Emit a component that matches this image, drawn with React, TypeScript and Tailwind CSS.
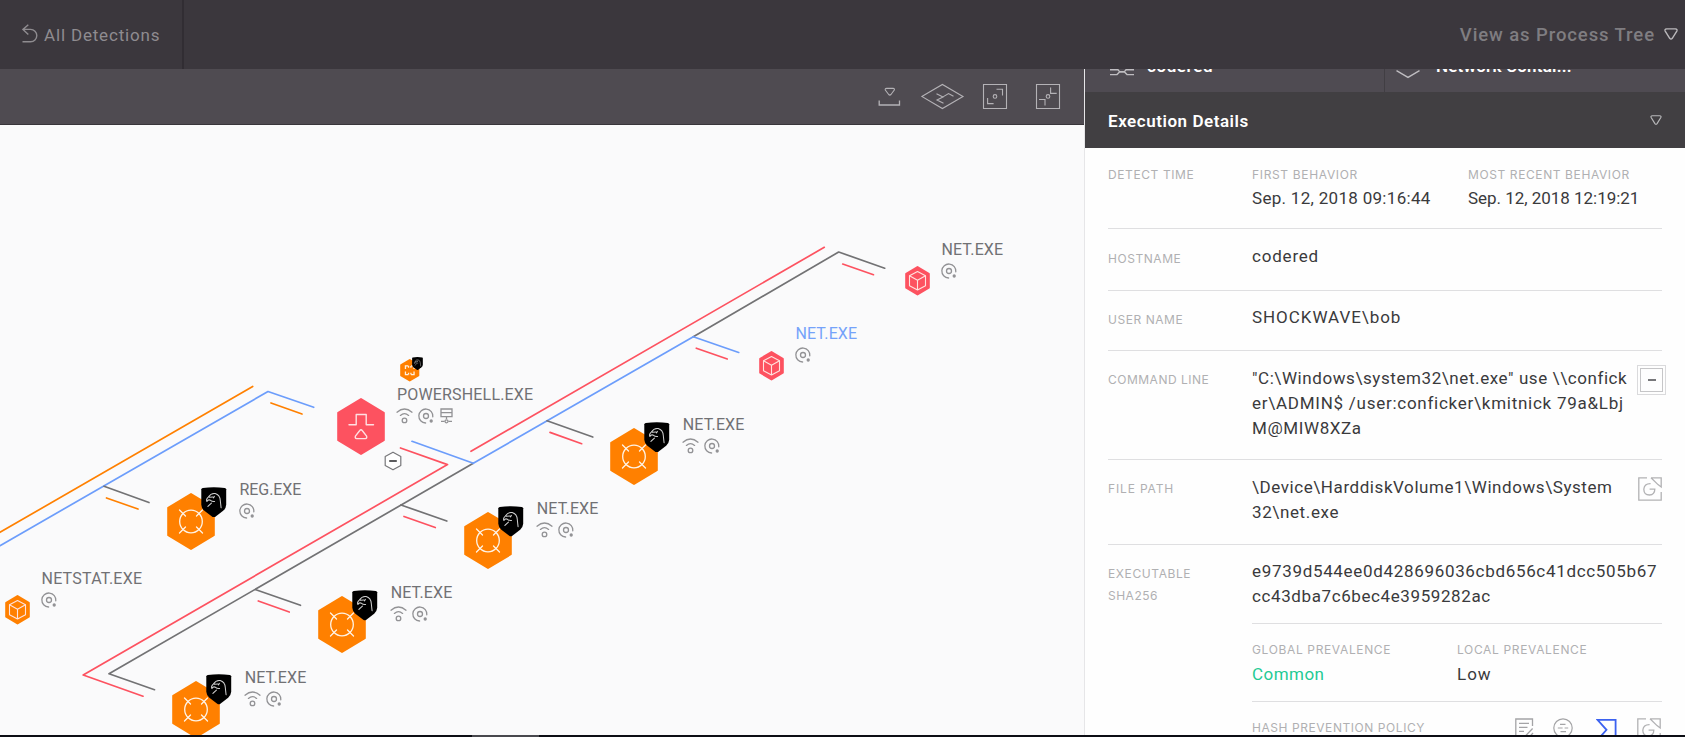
import type { ReactNode } from 'react';

const ORANGE = '#ff8000';
const RED = '#fd5260';
const BLUE = '#6c9dfb';
const GREY = '#727274';

/* ---------- graph icons ---------- */

function Hexagon({ color, w, h, children }: { color: string; w: number; h: number; children?: ReactNode }) {
  const x = w / 2 - 1.2;
  const y = h / 2 - 1;
  return (
    <svg width={w} height={h} viewBox={`${-w / 2} ${-h / 2} ${w} ${h}`} className="block overflow-visible">
      <polygon
        points={`0,${-y} ${x},${-y / 2} ${x},${y / 2} 0,${y} ${-x},${y / 2} ${-x},${-y / 2}`}
        fill={color}
        stroke={color}
        strokeWidth="2"
        strokeLinejoin="round"
      />
      {children}
    </svg>
  );
}

const targetGlyph = (
  <g fill="none" stroke="#fff3e6" strokeWidth="1.3" strokeLinecap="round">
    <circle r="11.3" />
    <path d="M-11.5 -11.5L-5.5 -5.5M11.5 -11.5L5.5 -5.5M-11.5 11.5L-5.5 5.5M11.5 11.5L5.5 5.5" />
  </g>
);

const cubeGlyph = (
  <g fill="none" stroke="#ffe3df" strokeWidth="1.1" strokeLinejoin="round">
    <path d="M0 -9.3L8 -5V5L0 9.3L-8 5V-5Z" />
    <path d="M-8 -5L0 -0.6L8 -5M0 -0.6V9.3" />
  </g>
);

const pulseGlyph = (
  <g fill="none" stroke="#ffe0e2" strokeWidth="1.4" strokeLinejoin="round" strokeLinecap="round">
    <path d="M-12 -1.8H-4.8V-12H5.2V-1.8H12.5" />
    <path d="M0 3.2Q0.6 3.2 1.2 4L5.6 9.6Q6.2 11.9 4.4 12.1H-4.4Q-6.2 11.9 -5.6 9.6L-1.2 4Q-0.6 3.2 0 3.2Z" />
  </g>
);

function Shield({ size }: { size: number }) {
  return (
    <svg width={size} height={size * 1.2} viewBox="0 0 26 31" className="block">
      <path d="M0.3 2.3Q0.6 1.2 1.8 1Q13 -0.6 24.2 1Q25.4 1.2 25.6 2.3V18Q25.4 21.5 22.5 24L14.6 30.2Q13 31.3 11.4 30.2L3.4 24Q0.5 21.5 0.3 18Z" fill="#000" />
      <path
        d="M6 14.6Q4.8 12.4 7.4 10.2Q10.4 5.8 14.4 6.6Q19.2 8 19.6 13.6L20.4 21M6 14.6Q7.4 12.2 9.6 13.4Q11.6 15 13.8 14.6M8.6 10.4L12.2 10M7 19.6L10.6 16.2M13.6 9.4L12.6 11"
        fill="none"
        stroke="#d0d0d0"
        strokeWidth="1.05"
        strokeLinecap="round"
      />
    </svg>
  );
}

function WifiIcon() {
  return (
    <svg width="17" height="16" viewBox="0 0 17 16" fill="none" stroke="#929295" strokeWidth="1.3" strokeLinecap="round">
      <path d="M1 4.2Q8.5 -2.2 16 4.2M4.4 7.4Q8.5 4 12.6 7.4" />
      <circle cx="8.5" cy="12.4" r="2.3" />
    </svg>
  );
}

function DiskIcon() {
  return (
    <svg width="16" height="16" viewBox="0 0 16 16" fill="none" stroke="#929295" strokeWidth="1.3" strokeLinecap="round">
      <path d="M7.6 15A7 7 0 1 1 14.8 8.8" />
      <circle cx="8" cy="8" r="2.5" />
      <circle cx="13.2" cy="13" r="1" fill="#929295" />
    </svg>
  );
}

function ServerIcon() {
  return (
    <svg width="13" height="16" viewBox="0 0 13 16" fill="none" stroke="#929295" strokeWidth="1.3" className="ml-[1px]">
      <path d="M1 1H12V8.6H1ZM1 4.6H12M6.5 8.6V11M1 13.3H4.6M8.4 13.3H12" />
      <circle cx="6.5" cy="13.3" r="1.5" />
    </svg>
  );
}

/* ---------- graph ---------- */

type Kind = 'target' | 'cube' | 'pulse';

interface GraphNode {
  name: string;
  x: number;
  y: number;
  color: string;
  kind: Kind;
  labelX: number;
  labelY: number;
  wifi?: boolean;
  server?: boolean;
  shield?: boolean;
  active?: boolean;
  tracking: string;
}

const large = (name: string, x: number, y: number, wifi: boolean, tracking: string): GraphNode => ({
  name, x, y, color: ORANGE, kind: 'target', labelX: x + 49, labelY: y - 41.5, wifi, shield: true, tracking,
});

const nodes: GraphNode[] = [
  large('REG.EXE', 190.6, 396.5, false, 'tracking-[-0.1px]'),
  large('NET.EXE', 633.8, 331.3, true, 'tracking-[0.1px]'),
  large('NET.EXE', 487.8, 415.6, true, 'tracking-[0.1px]'),
  large('NET.EXE', 341.7, 499.8, true, 'tracking-[0.1px]'),
  large('NET.EXE', 195.7, 584.2, true, 'tracking-[0.1px]'),
  { name: 'NET.EXE', x: 917.5, y: 156.2, color: RED, kind: 'cube', labelX: 941.5, labelY: 114.6, tracking: 'tracking-[0.1px]' },
  { name: 'NET.EXE', x: 771.5, y: 240.5, color: RED, kind: 'cube', labelX: 795.5, labelY: 199, active: true, tracking: 'tracking-[0.1px]' },
  { name: 'NETSTAT.EXE', x: 17.3, y: 485, color: ORANGE, kind: 'cube', labelX: 41.5, labelY: 443.6, tracking: 'tracking-[0.23px]' },
  { name: 'POWERSHELL.EXE', x: 361, y: 301.8, color: RED, kind: 'pulse', labelX: 397, labelY: 260, wifi: true, server: true, tracking: 'tracking-[0.17px]' },
];

const edges: [string, string][] = [
  [ORANGE, '0,532.3 252.7,386.5'],
  [BLUE, '0,545.7 268,391.5 313.7,407.3'],
  [ORANGE, '271,403 302,414'],
  [GREY, '104,486.3 149,502.5'],
  [ORANGE, '106.5,498 138,509'],
  [RED, '400.5,448 447.5,464.6 83.2,675 143,696.2'],
  [GREY, '473.3,463.3 109,673.8 154.5,689.7'],
  [GREY, '693.3,336.7 838.7,252 884.7,268.2'],
  [BLUE, '412,441.3 473.3,463.3 693.3,336.7 738.7,352.5'],
  [RED, '471,451.3 824.3,247.3'],
  [RED, '842.7,264 873.5,274.7'],
  [RED, '696.3,348.2 727.3,359'],
  [GREY, '547,420.8 592.8,437'],
  [RED, '550,432.4 581.7,443.7'],
  [GREY, '401,505 446.8,521'],
  [RED, '404,516.5 435.3,527.5'],
  [GREY, '255.2,589.5 300.5,605.3'],
  [RED, '258.3,601 289.3,612'],
];

function ProcessNode({ node }: { node: GraphNode }) {
  const small = node.kind === 'cube';
  const w = small ? 25 : 48;
  const h = small ? 29.5 : 57;
  return (
    <>
      <div className="absolute" style={{ left: node.x - w / 2, top: node.y - h / 2 }}>
        <Hexagon color={node.color} w={w} h={h}>
          {node.kind === 'target' ? targetGlyph : node.kind === 'cube' ? cubeGlyph : pulseGlyph}
        </Hexagon>
      </div>
      {node.shield && (
        <div className="absolute" style={{ left: node.x + 10.4, top: node.y - 34.8 }}>
          <Shield size={25.6} />
        </div>
      )}
      <div className="absolute flex flex-col" style={{ left: node.labelX, top: node.labelY }}>
        <span className={`text-base leading-5 whitespace-nowrap ${node.tracking} ${node.active ? 'text-[#75a2fa]' : 'text-[#717174]'}`}>
          {node.name}
        </span>
        <span className="mt-[3px] ml-[-0.7px] flex gap-[5px]">
          {node.wifi && <WifiIcon />}
          <DiskIcon />
          {node.server && <ServerIcon />}
        </span>
      </div>
    </>
  );
}

function Graph() {
  return (
    <div className="relative flex-1 overflow-hidden bg-[#fafafb]">
      <svg width="1084" height="610" viewBox="0 125 1084 610" className="block">
        <g fill="none" strokeWidth="1.7" strokeLinecap="round" strokeLinejoin="round">
          {edges.map(([color, points]) => (
            <polyline key={points} points={points} stroke={color} />
          ))}
        </g>
      </svg>
      {nodes.map((node) => (
        <ProcessNode key={`${node.x}-${node.y}`} node={node} />
      ))}
      <div className="absolute top-[234px] left-[399.5px]">
        <Hexagon color={ORANGE} w={19.5} h={22.5}>
          <path
            d="M-1.3 -4.3H-4.3V-1.3M1.3 -4.3H4.3V-1.3M-4.3 1.3V4.3H-1.3M4.3 1.3V4.3H1.3M-1.2 -2.6V-4.3M1.2 -2.6V-4.3M-1.2 2.6V4.3M1.2 2.6V4.3"
            fill="none"
            stroke="#fff0e0"
            strokeWidth="1.3"
          />
        </Hexagon>
      </div>
      <div className="absolute top-[232px] left-[412px]">
        <Shield size={11} />
      </div>
      <div className="absolute top-[325.5px] left-[383.6px]">
        <svg width="18" height="20" viewBox="-9 -10 18 20" className="block">
          <path d="M0 -8.8L7.8 -4.4V4.4L0 8.8L-7.8 4.4V-4.4Z" fill="#fff" stroke="#77777a" strokeWidth="1.2" strokeLinejoin="round" />
          <path d="M-3.8 0H3.8" stroke="#4a4a4c" strokeWidth="1.8" />
        </svg>
      </div>
    </div>
  );
}

/* ---------- bars ---------- */

function Caret({ className }: { className: string }) {
  return (
    <svg viewBox="0 0 14 12" fill="none" stroke="currentColor" className={className}>
      <path d="M2.6 0.9H11.4Q13.7 1.1 12.8 3.1L8.3 10.3Q7 11.9 5.7 10.3L1.2 3.1Q0.3 1.1 2.6 0.9Z" strokeWidth="1.4" />
    </svg>
  );
}

function Header() {
  return (
    <header className="flex h-[69px] shrink-0 items-center justify-between bg-[#3b373d]">
      <div className="flex h-full w-[184px] items-center border-r-2 border-[#312d33] pl-[22px] text-[#8f8c90]">
        <svg width="16" height="20" viewBox="0 0 16 20" fill="none" stroke="currentColor" strokeWidth="1.4" className="mt-[-2px] shrink-0">
          <path d="M6.3 0.8L1 5.4L6.3 10.6M1 5.4H8.6A6.2 6.2 0 0 1 8.6 17.8H0.5" />
        </svg>
        <span className="ml-[6px] text-[17px] leading-6 tracking-[0.83px] whitespace-nowrap">All Detections</span>
      </div>
      <div className="flex items-center pr-[7px]">
        <span className="text-[18.5px] leading-6 font-medium tracking-[0.9px] whitespace-nowrap text-[#7f7d81]">View as Process Tree</span>
        <Caret className="mt-[-2px] ml-[9px] h-3 w-[14px] text-[#bab8bb]" />
      </div>
    </header>
  );
}

function Toolbar() {
  return (
    <div className="flex h-14 shrink-0 items-start border-b border-[#38353a] bg-[#4f4b51] pl-[878px] text-[#b4b2b6]">
      <svg width="24" height="28" viewBox="878 83 24 28" fill="none" stroke="currentColor" strokeWidth="1.3" className="mt-[14px]">
        <path d="M879.2 100.5V105H899.5V100.5" />
        <path d="M886.6 88.4H893Q894.9 88.6 894.3 90L891 94.5Q889.8 95.6 888.7 94.5L885.3 90Q884.8 88.6 886.6 88.4Z" strokeWidth="1.1" />
      </svg>
      <svg width="44" height="28" viewBox="921 83 44 28" fill="none" stroke="currentColor" strokeWidth="1.1" className="mt-[14px] ml-[19px]">
        <path d="M921.8 96.4L942.4 84.4L963 96.4L942.4 108.5Z" />
        <path d="M936.5 93.8L943 96.9L937 100L943.5 103.3M943 96.9L948.5 93.6L953.5 96.3" />
      </svg>
      <svg width="26" height="28" viewBox="982 83 26 28" fill="none" stroke="currentColor" strokeWidth="1.1" className="mt-[14px] ml-[17px]">
        <path d="M983.5 84.5H1006.5V108.5H983.5Z" />
        <path d="M996.5 89.3H1002.5V95.5M987.6 98V103.6H993.6" />
        <circle cx="995" cy="96.4" r="1.8" />
      </svg>
      <svg width="26" height="28" viewBox="1035 83 26 28" fill="none" stroke="currentColor" strokeWidth="1.1" className="mt-[14px] ml-[27px]">
        <path d="M1036.5 84.5H1059.5V108.5H1036.5Z" />
        <path d="M1050.6 87.4V93.4H1056.7M1039 99.5H1045V105.5" />
        <circle cx="1048" cy="96.4" r="1.8" />
      </svg>
    </div>
  );
}

/* ---------- details panel ---------- */

function Label({ children, className = 'tracking-[0.6px]' }: { children: ReactNode; className?: string }) {
  return <div className={`font-['Inter'] text-xs leading-[22px] whitespace-nowrap text-[#b0b0b2] ${className}`}>{children}</div>;
}

function Value({ children, className = '' }: { children: ReactNode; className?: string }) {
  return <div className={`text-[17px] leading-[25px] whitespace-nowrap ${className}`}>{children}</div>;
}

function Row({ label, className, children }: { label: ReactNode; className: string; children: ReactNode }) {
  return (
    <div className={`flex shrink-0 border-b border-[#dfdfe1] ${className}`}>
      <div className="w-36 shrink-0">{label}</div>
      {children}
    </div>
  );
}

function GraphLinkIcon() {
  return (
    <svg width="24" height="24" viewBox="0 0 24 24" fill="none" stroke="#b2b2b4" strokeWidth="1.3" className="shrink-0">
      <path d="M9 0.8H0.8V23.2H23.2V15M13 0.8H23.2V10L20 7.6L13 0.8" />
      <path d="M12.6 6.6Q6.4 6.4 5.8 12.2Q6 18 11.4 18Q16.8 17.6 16.8 12.2H11.6" />
    </svg>
  );
}

function DetailsPanel() {
  return (
    <aside className="flex w-[601px] shrink-0 flex-col overflow-hidden border-l border-[#e6e6e8] bg-[#fefefe] text-[#3a3a3c]">
      <div className="flex h-[23px] shrink-0 overflow-hidden bg-[#4f4b52] text-[17px] leading-5 font-semibold text-white">
        <div className="flex w-[299px] items-start pl-[25px]">
          <svg width="24" height="8" viewBox="0 0 24 8" fill="none" stroke="#bfbdc1" strokeWidth="1.4">
            <path d="M0 0.8H8L9.5 2.6H14.5L16 0.8H24M0 5.6H7L9.5 3H14.5L17 5.6H24" />
          </svg>
          <span className="mt-[-13px] ml-[13px] tracking-[0.6px]">codered</span>
        </div>
        <div className="flex flex-1 items-start border-l border-[#413e43] pl-[11px]">
          <svg width="24" height="10" viewBox="0 0 24 10" fill="none" stroke="#bfbdc1" strokeWidth="1.3">
            <path d="M0.5 1.6L12 8.4L23.5 1.6" />
          </svg>
          <span className="mt-[-13px] ml-[16px] tracking-[0.2px]">Network Contai...</span>
        </div>
      </div>
      <div className="flex h-14 shrink-0 items-center justify-between bg-[#413f42] px-[23px]">
        <h2 className="mt-px text-[17px] leading-6 font-semibold tracking-[0.54px] text-white">Execution Details</h2>
        <Caret className="mt-[-1px] h-[10px] w-3 text-[#b8b8ba]" />
      </div>
      <div className="flex flex-col px-[23px]">
        <Row className="h-[81px] pt-4" label={<Label>DETECT TIME</Label>}>
          <div className="w-[216px]">
            <Label className="tracking-[0.66px]">FIRST BEHAVIOR</Label>
            <Value className="tracking-[0.3px]">Sep. 12, 2018 09:16:44</Value>
          </div>
          <div>
            <Label>MOST RECENT BEHAVIOR</Label>
            <Value className="tracking-[-0.03px]">Sep. 12, 2018 12:19:21</Value>
          </div>
        </Row>
        <Row className="h-[62px] pt-[15px]" label={<Label className="mt-1 tracking-[0.55px]">HOSTNAME</Label>}>
          <Value className="tracking-[0.8px]">codered</Value>
        </Row>
        <Row className="h-[60px] pt-3.5" label={<Label className="mt-1 tracking-[0.55px]">USER NAME</Label>}>
          <Value className="tracking-[0.95px]">SHOCKWAVE\bob</Value>
        </Row>
        <Row className="h-[109px] pt-[15px]" label={<Label className="mt-[3px] tracking-[0.5px]">COMMAND LINE</Label>}>
          <div className="flex-1">
            <Value className="tracking-[0.58px]">{'"C:\\Windows\\system32\\net.exe" use \\\\confick'}</Value>
            <Value className="tracking-[0.74px]">er\ADMIN$ /user:conficker\kmitnick 79a&amp;Lbj</Value>
            <Value className="tracking-[0.6px]">M@MIW8XZa</Value>
          </div>
          <div className="mt-[-1px] mr-[-4px] flex h-[30px] w-[29px] items-center justify-center border border-[#dadadc]">
            <div className="flex h-6 w-[23px] items-center justify-center border border-[#c6c6c8]">
              <div className="h-[2px] w-2 bg-[#77777a]" />
            </div>
          </div>
        </Row>
        <Row className="h-[85px] pt-[15px]" label={<Label className="mt-[3px] tracking-[0.85px]">FILE PATH</Label>}>
          <div className="flex-1">
            <Value className="tracking-[0.57px]">\Device\HarddiskVolume1\Windows\System</Value>
            <Value className="tracking-[0.62px]">32\net.exe</Value>
          </div>
          <div className="mt-[2px]"><GraphLinkIcon /></div>
        </Row>
        <div className="flex pt-3.5">
          <div className="w-36 shrink-0">
            <Label className="mt-1 tracking-[0.6px]">EXECUTABLE</Label>
            <Label className="tracking-[0.5px]">SHA256</Label>
          </div>
          <div className="flex-1">
            <div className="h-[65px] border-b border-[#dfdfe1]">
              <Value className="tracking-[0.68px]">e9739d544ee0d428696036cbd656c41dcc505b67</Value>
              <Value className="tracking-[0.6px]">cc43dba7c6bec4e3959282ac</Value>
            </div>
            <div className="flex h-[78px] border-b border-[#dfdfe1] pt-[15px]">
              <div className="w-[205px]">
                <Label className="tracking-[0.64px]">GLOBAL PREVALENCE</Label>
                <Value className="mt-px tracking-[0.45px] text-[#1fca94]">Common</Value>
              </div>
              <div>
                <Label className="tracking-[0.65px]">LOCAL PREVALENCE</Label>
                <Value className="mt-px tracking-[1px]">Low</Value>
              </div>
            </div>
            <div className="flex items-start pt-[15px]">
              <Label className="w-[263px] tracking-[0.56px]">HASH PREVENTION POLICY</Label>
              <div className="mt-[1px] flex text-[#a4a4a6]">
                <svg width="19" height="23" viewBox="0 0 19 23" fill="none" stroke="currentColor" strokeWidth="1.3">
                  <path d="M17.5 8V1H0.8V21H8M4 5.4H14M4 9.4H12.5M4 13.4H9M17.6 10.5L10.4 18V21.5M18 15L13 20.5" />
                </svg>
                <svg width="20" height="20" viewBox="0 0 20 20" fill="none" stroke="currentColor" strokeWidth="1.2" className="ml-[19px]">
                  <circle cx="10" cy="10" r="9.2" />
                  <path d="M7 6.4H12.5M4.8 10H9.6M11.6 10H15.2M7.5 13.6H13" />
                </svg>
                <svg width="21" height="24" viewBox="0 0 21 24" fill="none" stroke="#3c62f0" strokeWidth="1.8" className="ml-[23px]">
                  <path d="M1.5 1.8H19.6V22H1.5L10.5 11.8Z" />
                </svg>
                <div className="ml-[20px]"><GraphLinkIcon /></div>
              </div>
            </div>
          </div>
        </div>
      </div>
    </aside>
  );
}

export default function App() {
  return (
    <div className="flex h-[737px] w-[1685px] flex-col overflow-hidden bg-[#fafafb] font-['Roboto',sans-serif]">
      <Header />
      <div className="flex min-h-0 flex-1">
        <main className="flex w-[1084px] shrink-0 flex-col">
          <Toolbar />
          <Graph />
        </main>
        <DetailsPanel />
      </div>
      <footer className="flex h-[2px] shrink-0 bg-[#0c0d14]">
        <div className="ml-[472px] w-[67px] bg-[#48484e]" />
      </footer>
    </div>
  );
}
